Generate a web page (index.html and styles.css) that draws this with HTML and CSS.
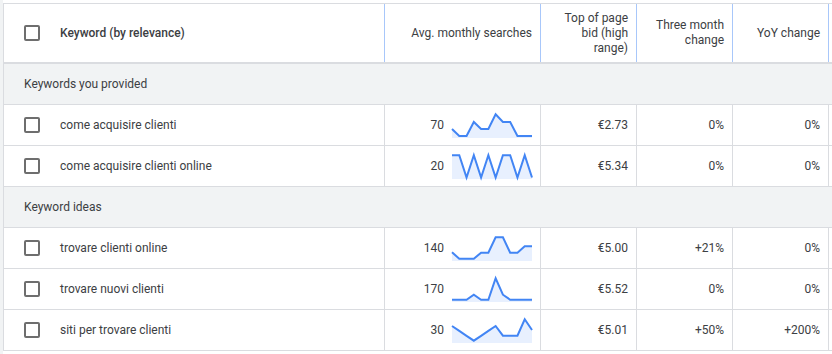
FILE: index.html
```html
<!DOCTYPE html>
<html>
<head>
<meta charset="utf-8">
<link rel="stylesheet" href="styles.css">
</head>
<body>
<div class="page">
  <div class="table">
    <div class="row head">
      <div class="cell kw"><span class="cb"></span><span class="hbold">Keyword (by relevance)</span></div>
      <div class="cell num"><span class="htext">Avg. monthly searches</span></div>
      <div class="cell num narrow"><span class="htext">Top of page bid (high range)</span></div>
      <div class="cell num narrow"><span class="htext">Three month change</span></div>
      <div class="cell num narrow"><span class="htext">YoY change</span></div>
      <div class="cell last"></div>
    </div>

    <div class="group">Keywords you provided</div>

    <div class="row">
      <div class="cell kw"><span class="cb"></span><span>come acquisire clienti</span></div>
      <div class="cell num"><span>70</span>
        <svg class="spark" viewBox="0 0 80 25" width="80" height="25"><polygon class="area" points="0,25 0,16 7.27,23 14.55,23 21.82,9 29.09,16 36.36,16 43.64,1.3 50.91,9 58.18,9 65.45,23 72.73,23 80,23 80,25"/><polyline class="line" points="0,16 7.27,23 14.55,23 21.82,9 29.09,16 36.36,16 43.64,1.3 50.91,9 58.18,9 65.45,23 72.73,23 80,23"/></svg>
      </div>
      <div class="cell num">€2.73</div>
      <div class="cell num">0%</div>
      <div class="cell num">0%</div>
      <div class="cell last"></div>
    </div>

    <div class="row">
      <div class="cell kw"><span class="cb"></span><span>come acquisire clienti online</span></div>
      <div class="cell num"><span>20</span>
        <svg class="spark" viewBox="0 0 80 25" width="80" height="25"><polygon class="area" points="0,25 0,1.3 7.27,1.3 14.55,23.5 21.82,1.3 29.09,23.5 36.36,1.3 43.64,23.5 50.91,1.3 58.18,1.3 65.45,23.5 72.73,1.3 80,23.5 80,25"/><polyline class="line" points="0,1.3 7.27,1.3 14.55,23.5 21.82,1.3 29.09,23.5 36.36,1.3 43.64,23.5 50.91,1.3 58.18,1.3 65.45,23.5 72.73,1.3 80,23.5"/></svg>
      </div>
      <div class="cell num">€5.34</div>
      <div class="cell num">0%</div>
      <div class="cell num">0%</div>
      <div class="cell last"></div>
    </div>

    <div class="group">Keyword ideas</div>

    <div class="row">
      <div class="cell kw"><span class="cb"></span><span>trovare clienti online</span></div>
      <div class="cell num"><span>140</span>
        <svg class="spark" viewBox="0 0 80 25" width="80" height="25"><polygon class="area" points="0,25 0,16.3 7.27,22.7 14.55,22.7 21.82,22.7 29.09,16.7 36.36,16.7 43.64,1.3 50.91,1.3 58.18,16.7 65.45,16.7 72.73,10.3 80,10.3 80,25"/><polyline class="line" points="0,16.3 7.27,22.7 14.55,22.7 21.82,22.7 29.09,16.7 36.36,16.7 43.64,1.3 50.91,1.3 58.18,16.7 65.45,16.7 72.73,10.3 80,10.3"/></svg>
      </div>
      <div class="cell num">€5.00</div>
      <div class="cell num">+21%</div>
      <div class="cell num">0%</div>
      <div class="cell last"></div>
    </div>

    <div class="row">
      <div class="cell kw"><span class="cb"></span><span>trovare nuovi clienti</span></div>
      <div class="cell num"><span>170</span>
        <svg class="spark" viewBox="0 0 80 25" width="80" height="25"><polygon class="area" points="0,25 0,22.7 7.27,22.7 14.55,22.7 21.82,17.7 29.09,22.7 36.36,22.7 43.64,1.3 50.91,17.7 58.18,22.7 65.45,22.7 72.73,22.7 80,22.7 80,25"/><polyline class="line" points="0,22.7 7.27,22.7 14.55,22.7 21.82,17.7 29.09,22.7 36.36,22.7 43.64,1.3 50.91,17.7 58.18,22.7 65.45,22.7 72.73,22.7 80,22.7"/></svg>
      </div>
      <div class="cell num">€5.52</div>
      <div class="cell num">0%</div>
      <div class="cell num">0%</div>
      <div class="cell last"></div>
    </div>

    <div class="row">
      <div class="cell kw"><span class="cb"></span><span>siti per trovare clienti</span></div>
      <div class="cell num"><span>30</span>
        <svg class="spark" viewBox="0 0 80 25" width="80" height="25"><polygon class="area" points="0,25 0,8 7.27,12.9 14.55,17.8 21.82,22.7 29.09,17.8 36.36,12.9 43.64,8 50.91,17.7 58.18,17.7 65.45,17.7 72.73,1.3 80,12 80,25"/><polyline class="line" points="0,8 7.27,12.9 14.55,17.8 21.82,22.7 29.09,17.8 36.36,12.9 43.64,8 50.91,17.7 58.18,17.7 65.45,17.7 72.73,1.3 80,12"/></svg>
      </div>
      <div class="cell num">€5.01</div>
      <div class="cell num">+50%</div>
      <div class="cell num">+200%</div>
      <div class="cell last"></div>
    </div>
  </div>
</div>
</body>
</html>
```

FILE: styles.css
```css
html, body {
  margin: 0;
  padding: 0;
  background: #ffffff;
}
body {
  width: 832px;
  height: 354px;
  overflow: hidden;
  font-family: Roboto, "Noto Sans", Arial, sans-serif;
  font-size: 12px;
  color: #3c4043;
}
.page {
  border-left: 3px solid #f1f3f4;
  padding-top: 3px;
  height: 351px;
}
.table {
  border-top: 1px solid #dadce0;
  border-left: 1px solid #dadce0;
}
.row {
  display: grid;
  grid-template-columns: 381px 156px 96px 96px 96px 1fr;
  height: 41px;
  box-sizing: border-box;
  border-bottom: 1px solid #dadce0;
}
.row.head {
  height: 60px;
  border-bottom: 2px solid #dadce0;
}
.cell {
  display: flex;
  align-items: center;
  box-sizing: border-box;
  border-right: 1px solid #dadce0;
  padding-right: 8px;
  min-width: 0;
}
.head .cell {
  border-right-color: #a8c7fa;
}
.cell.last {
  border-right: none;
}
.cell.kw {
  padding-left: 20px;
  gap: 20px;
}
.cell.num {
  justify-content: flex-end;
  text-align: right;
  gap: 8px;
}
.head .cell.narrow {
  padding-left: 16px;
}
.htext {
  line-height: 15px;
}
.hbold {
  font-weight: 500;
  color: #3c4043;
}
.cb {
  width: 12px;
  height: 12px;
  border: 2px solid #6e6e6e;
  border-radius: 2px;
  flex: none;
}
.group {
  height: 41px;
  box-sizing: border-box;
  border-bottom: 1px solid #dadce0;
  background: #f1f3f4;
  display: flex;
  align-items: center;
  padding-left: 20px;
}
.spark {
  display: block;
  flex: none;
  overflow: visible;
}
.spark .area {
  fill: #e8f0fe;
  stroke: none;
}
.spark .line {
  fill: none;
  stroke: #4285f4;
  stroke-width: 2;
  stroke-linejoin: miter;
}
```
